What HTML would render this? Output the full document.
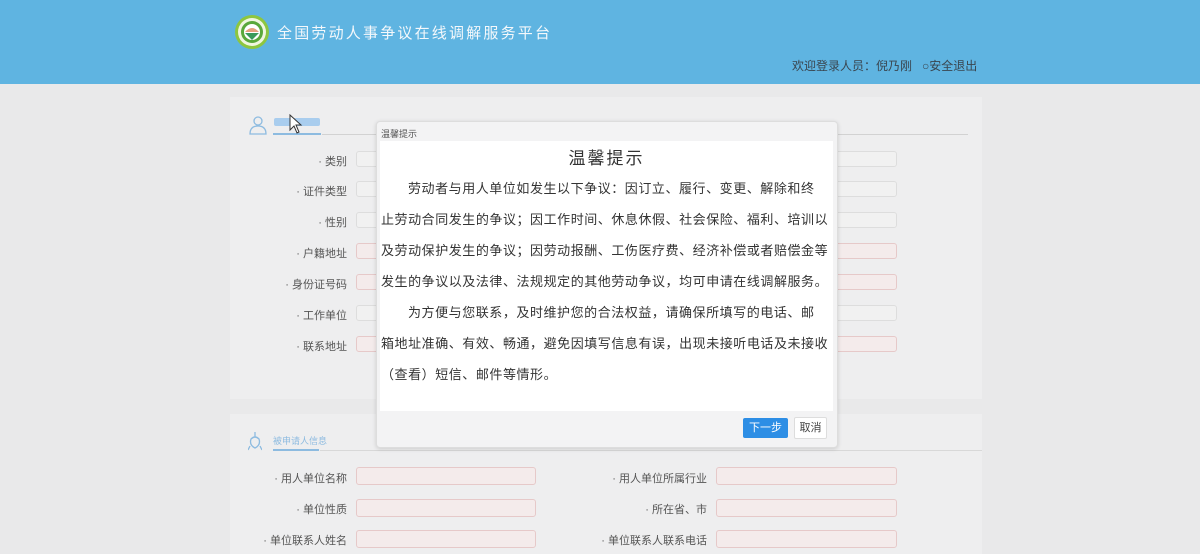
<!DOCTYPE html>
<html><head><meta charset="utf-8"><style>
*{margin:0;padding:0;box-sizing:border-box}
body{width:1200px;height:552px;overflow:hidden;background:#e9e9ea;font-family:"Liberation Sans","Noto Sans CJK SC",sans-serif;position:relative}
.hdr{position:absolute;left:0;top:0;width:1200px;height:84px;background:#5fb4e1}
.title{position:absolute;left:277px;top:22px;color:#f4f8fb;font-size:15px;letter-spacing:2.2px}
.user{position:absolute;left:792px;top:57px;font-size:12px;color:#3a4650}
.panel{position:absolute;left:230px;width:752px;background:#eeeeef}
.lab{position:absolute;font-size:11px;color:#555;text-align:right;width:150px}
.inp{position:absolute;height:16px;border:1px solid #e6c9c9;background:#f4ebeb;border-radius:3px}
.inp.g{border-color:#ddd;background:#f1f1f1}
.dlg{position:absolute;left:376px;top:121px;width:462px;height:327px;background:#f3f3f4;border:1px solid #ddd;border-radius:4px;box-shadow:0 1px 4px rgba(0,0,0,.15)}
.dt{position:absolute;left:4px;top:5px;font-size:9px;color:#555}
.dc{position:absolute;left:3px;top:19px;width:453px;height:270px;background:#fff}
.dc h3{text-align:center;font-weight:normal;font-size:17px;color:#333;margin-top:6px;letter-spacing:2px;line-height:24px}
.dc div{font-size:13px;color:#333;line-height:31px;padding:0 1px;letter-spacing:.55px;white-space:nowrap}
.b1{position:absolute;left:366px;top:296px;width:45px;height:20px;background:#2d8ee5;color:#fff;font-size:11px;text-align:center;line-height:20px;border-radius:2px}
.b2{position:absolute;left:417px;top:295px;width:33px;height:22px;background:#fff;border:1px solid #ddd;color:#444;font-size:11px;text-align:center;line-height:20px;border-radius:2px}
</style></head><body>
<div class="hdr">
<svg style="position:absolute;left:234px;top:14px" width="36" height="36" viewBox="0 0 36 36"><circle cx="18" cy="18" r="17" fill="#8dc640"/><circle cx="18" cy="18" r="14" fill="#f0f6e0"/><circle cx="18" cy="18" r="11" fill="#5aa83a"/><circle cx="18" cy="18" r="8" fill="#fff"/><path d="M11 18 Q18 10 25 18Z" fill="#e6a07d"/><path d="M11 19 L25 19 L18 26Z" fill="#3a9a5a"/></svg>
<div class="title">全国劳动人事争议在线调解服务平台</div>
<div class="user">欢迎登录人员：倪乃刚 &nbsp;&nbsp;○安全退出</div>
</div>
<div class="panel" style="top:97px;height:302px"></div>
<div class="panel" style="top:414px;height:140px"></div>
<svg style="position:absolute;left:248px;top:115px" width="20" height="20" viewBox="0 0 20 20" fill="none" stroke="#8dbbe0" stroke-width="1.3"><circle cx="10" cy="6" r="4"/><path d="M2 19 Q2 11 10 11 Q18 11 18 19Z"/></svg>
<div style="position:absolute;left:274px;top:118px;width:46px;height:8px;background:#a9cdee;border-radius:2px"></div>
<div style="position:absolute;left:273px;top:133px;width:48px;height:2px;background:#8dbbe0"></div>
<div style="position:absolute;left:322px;top:134px;width:646px;height:1px;background:#d2d2d2"></div>
<div class="lab" style="left:197px;top:153px">· 类别</div>
<div class="lab" style="left:197px;top:183px">· 证件类型</div>
<div class="lab" style="left:197px;top:214px">· 性别</div>
<div class="lab" style="left:197px;top:245px">· 户籍地址</div>
<div class="lab" style="left:197px;top:276px">· 身份证号码</div>
<div class="lab" style="left:197px;top:307px">· 工作单位</div>
<div class="lab" style="left:197px;top:338px">· 联系地址</div>
<div class="inp g" style="left:356px;top:151px;width:541px"></div>
<div class="inp g" style="left:356px;top:181px;width:541px"></div>
<div class="inp g" style="left:356px;top:212px;width:541px"></div>
<div class="inp" style="left:356px;top:243px;width:541px"></div>
<div class="inp" style="left:356px;top:274px;width:541px"></div>
<div class="inp g" style="left:356px;top:305px;width:541px"></div>
<div class="inp" style="left:356px;top:336px;width:541px"></div>
<svg style="position:absolute;left:248px;top:431px" width="14" height="20" viewBox="0 0 14 20" fill="none" stroke="#8dbbe0" stroke-width="1.3"><path d="M7 1 L7 6 M3 8 Q7 4 11 8 Q13 14 7 17 Q1 14 3 8Z M2 15 L0 19 M12 15 L14 19"/></svg>
<div style="position:absolute;left:273px;top:434px;font-size:9px;color:#8dbbe0">被申请人信息</div>
<div style="position:absolute;left:273px;top:449px;width:46px;height:2px;background:#8dbbe0"></div>
<div style="position:absolute;left:320px;top:450px;width:662px;height:1px;background:#d8d8d8"></div>
<div class="lab" style="left:197px;top:470px">· 用人单位名称</div>
<div class="lab" style="left:197px;top:501px">· 单位性质</div>
<div class="lab" style="left:197px;top:532px">· 单位联系人姓名</div>
<div class="lab" style="left:557px;top:470px">· 用人单位所属行业</div>
<div class="lab" style="left:557px;top:501px">· 所在省、市</div>
<div class="lab" style="left:557px;top:532px">· 单位联系人联系电话</div>
<div class="inp" style="left:356px;top:467px;width:180px;height:18px"></div>
<div class="inp" style="left:356px;top:499px;width:180px;height:18px"></div>
<div class="inp" style="left:356px;top:530px;width:180px;height:18px"></div>
<div class="inp" style="left:716px;top:467px;width:181px;height:18px"></div>
<div class="inp" style="left:716px;top:499px;width:181px;height:18px"></div>
<div class="inp" style="left:716px;top:530px;width:181px;height:18px"></div>
<div class="dlg">
<div class="dt">温馨提示</div>
<div class="dc">
<h3>温馨提示</h3>
<div style="padding-left:28px;margin-top:2px">劳动者与用人单位如发生以下争议：因订立、履行、变更、解除和终</div>
<div>止劳动合同发生的争议；因工作时间、休息休假、社会保险、福利、培训以</div>
<div>及劳动保护发生的争议；因劳动报酬、工伤医疗费、经济补偿或者赔偿金等</div>
<div>发生的争议以及法律、法规规定的其他劳动争议，均可申请在线调解服务。</div>
<div style="padding-left:28px">为方便与您联系，及时维护您的合法权益，请确保所填写的电话、邮</div>
<div>箱地址准确、有效、畅通，避免因填写信息有误，出现未接听电话及未接收</div>
<div>（查看）短信、邮件等情形。</div>
</div>
<div class="b1">下一步</div>
<div class="b2">取消</div>
</div>
<svg style="position:absolute;left:289px;top:114px" width="14" height="20" viewBox="0 0 14 20"><path d="M1 1 L1 16 L5 12 L8 19 L10 18 L7 11 L12 11Z" fill="#fff" stroke="#333" stroke-width="1"/></svg>
</body></html>
